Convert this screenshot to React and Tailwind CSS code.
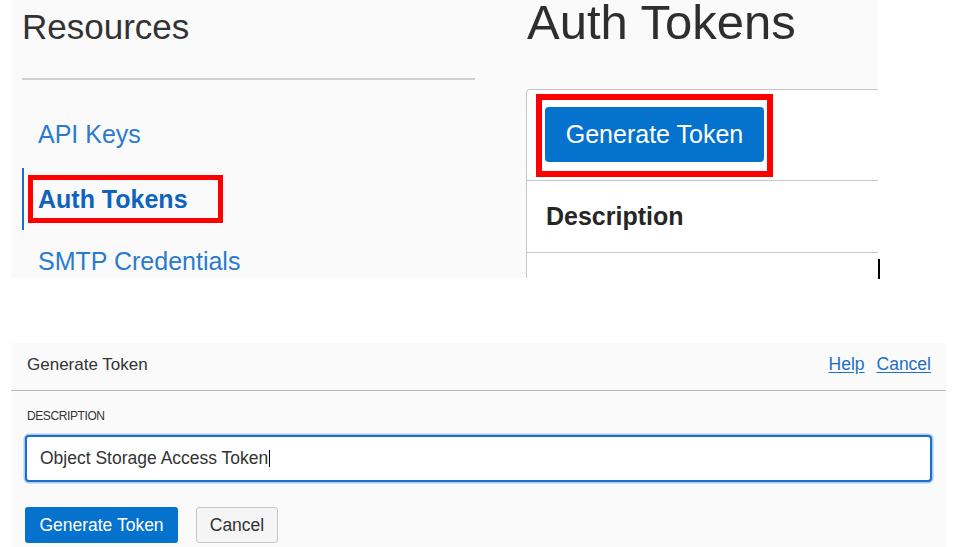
import React from 'react';

const font = { fontFamily: '"Liberation Sans", Arial, sans-serif' };

const NavLink = ({ children, className = '' }) => (
  <div className={`text-[25px] leading-[25px] text-[#2a7bd0] ${className}`}>{children}</div>
);

const ResourcesNav = () => (
  <div className="w-[515px] shrink-0 pl-[11px] pt-[9px] flex flex-col">
    <h2 className="text-[35px] leading-[35px] text-[#333333] font-normal">Resources</h2>
    <div className="mt-[34px] h-[2px] w-[453px] bg-[#cdd0d4]" />
    <NavLink className="mt-[42px] pl-[16px]">API Keys</NavLink>
    <div className="mt-[21px] flex h-[62px] items-start border-l-2 border-[#1a6fc7]">
      <div className="ml-[4px] mt-[7px] flex h-[48px] items-center border-[5px] border-[#ff0000] pl-[5px] pr-[30px]">
        <span className="text-[25px] leading-[25px] font-bold text-[#0f63bd]">Auth Tokens</span>
      </div>
    </div>
    <NavLink className="mt-[19px] pl-[16px]">SMTP Credentials</NavLink>
  </div>
);

const TokensPanel = () => (
  <div className="flex-1 flex flex-col">
    <h1 className="ml-px text-[49px] leading-[45px] text-[#2e2e2e] font-normal whitespace-nowrap">Auth Tokens</h1>
    <div className="mt-[44px] flex-1 w-[420px] rounded-tl-[4px] border-l border-t border-[#c3c7cb] bg-white">
      <div className="border-b border-[#c3c7cb] pt-[4px] pb-[3px] pl-[9px]">
        <div className="inline-flex border-[6px] border-[#ff0000] pt-[7px] pl-[3px] pr-[3px] pb-[9px]">
          <button className="flex h-[55px] w-[219px] items-center justify-center rounded-[4px] bg-[#0572ce] text-[25px] leading-[25px] text-white">
            Generate Token
          </button>
        </div>
      </div>
      <div className="h-[72px] border-b border-[#c3c7cb] pl-[19px] pt-[23px]">
        <span className="text-[25px] leading-[25px] font-bold text-[#262626]">Description</span>
      </div>
    </div>
  </div>
);

const GenerateDialog = () => (
  <div className="ml-[11px] mt-[64px] h-[204px] w-[935px] bg-[#fafafa] flex flex-col">
    <div className="flex h-[48px] items-start justify-between border-b border-[#b6bbc1] pt-[13px] pl-[16px] pr-[15px]">
      <span className="text-[17px] leading-[17px] text-[#333333]">Generate Token</span>
      <div className="flex gap-[12px] text-[17.5px] leading-[17px] text-[#1f6fc5]">
        <a href="#" className="underline underline-offset-2">Help</a>
        <a href="#" className="underline underline-offset-2">Cancel</a>
      </div>
    </div>
    <label className="mt-[19px] ml-[16px] text-[12px] leading-[12px] tracking-[-0.4px] text-[#333333]">DESCRIPTION</label>
    <div className="mx-[14px] mt-[13px] flex h-[47px] items-center rounded-[4px] border-2 border-[#1b6fca] bg-white pl-[13px] shadow-[0_0_0_1.5px_rgba(27,111,202,0.35)]">
      <span className="text-[17.5px] leading-[17px] text-[#333333]">Object Storage Access Token</span>
      <span className="ml-px h-[17px] w-px bg-black" />
    </div>
    <div className="ml-[14px] mt-[25px] flex gap-[18px]">
      <button className="h-[36px] w-[153px] rounded-[3px] bg-[#0572ce] text-[17.5px] leading-[17px] text-white">
        Generate Token
      </button>
      <button className="h-[36px] w-[82px] rounded-[3px] border border-[#c4c7ca] bg-[#f5f5f5] text-[17.5px] leading-[17px] text-[#333333]">
        Cancel
      </button>
    </div>
  </div>
);

export default function App() {
  return (
    <div style={font} className="h-[547px] w-[972px] overflow-hidden bg-white">
      <div className="flex h-[279px]">
        <div className="ml-[11px] flex h-[278px] w-[867px] overflow-hidden bg-[#fafafa]">
          <ResourcesNav />
          <TokensPanel />
        </div>
        <div className="h-[20px] w-[1.5px] self-end bg-black" />
      </div>
      <GenerateDialog />
    </div>
  );
}
